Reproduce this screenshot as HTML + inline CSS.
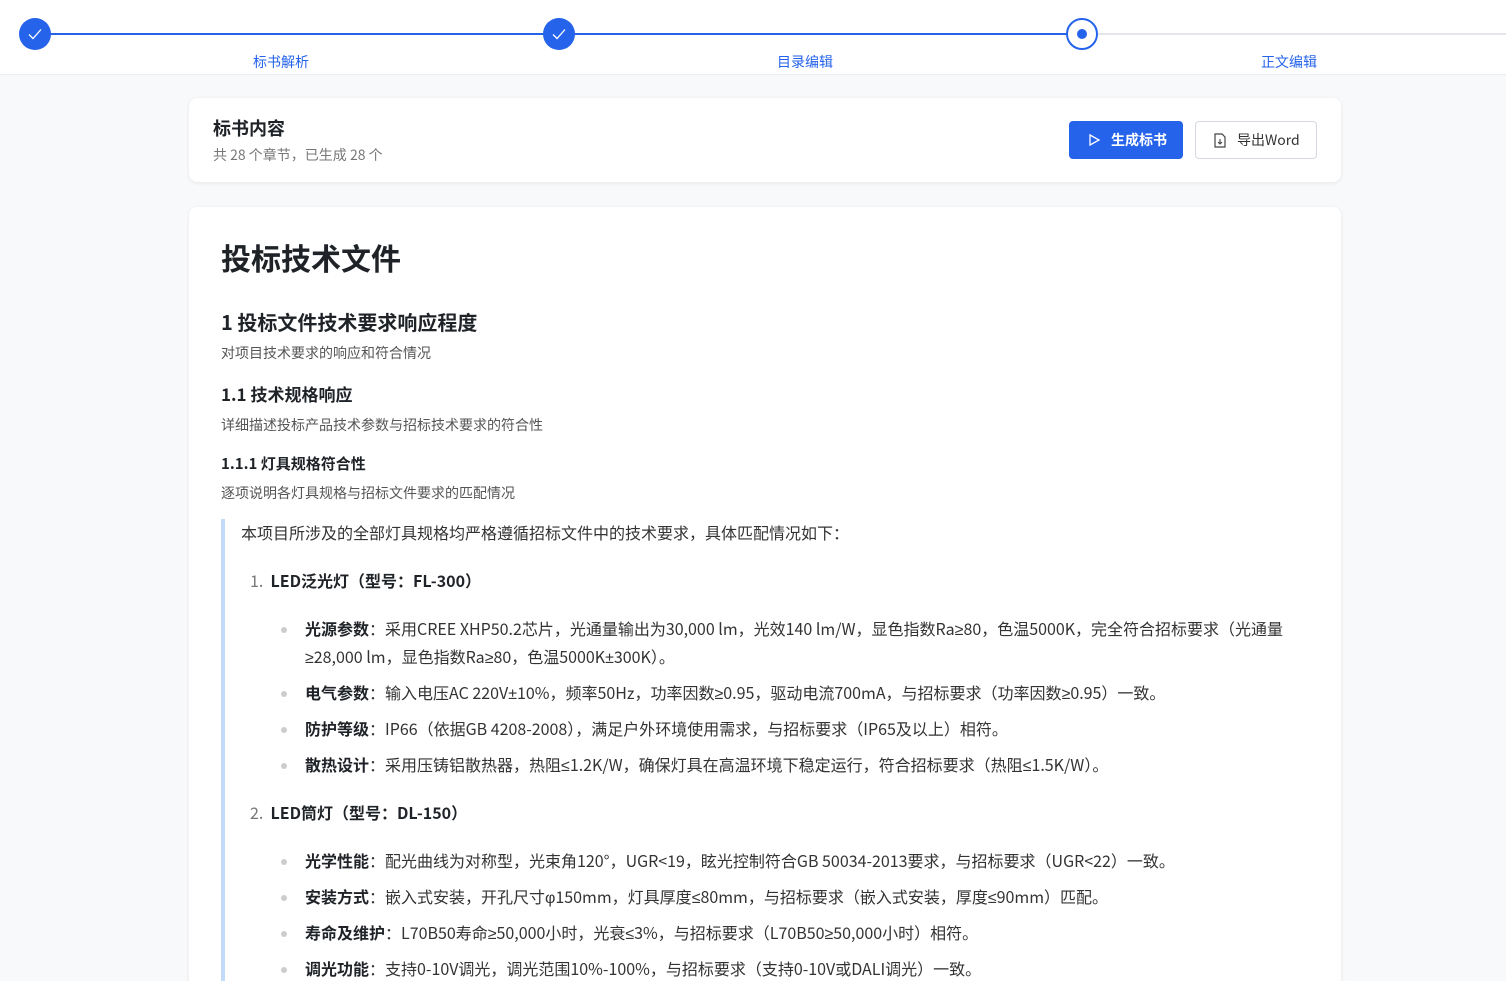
<!DOCTYPE html>
<html><head><meta charset="utf-8"><style>
*{margin:0;padding:0;box-sizing:border-box}
html,body{width:1506px;height:981px;overflow:hidden}
body{background:#f8f9fb;font-family:"Noto Sans CJK SC","Liberation Sans",sans-serif;color:#1f2328;position:relative;line-height:1.15}
.hdr{position:absolute;left:0;top:0;width:1506px;height:75px;background:#fff;border-bottom:1px solid #eceef2}
.ln{position:absolute;top:33px;height:2px}
.c{position:absolute;top:18px;width:32px;height:32px;border-radius:50%;background:#2563eb}
.c svg{position:absolute;left:8px;top:8px}
.lb{position:absolute;top:54px;font-size:14px;color:#2563eb;transform:translateX(-50%)}
.card{position:absolute;left:189px;width:1152px;background:#fff;border-radius:8px;box-shadow:0 1px 4px rgba(0,0,0,.08)}
.abs{position:absolute;white-space:nowrap}
.b{font-weight:bold}
.li{position:absolute;left:305px;font-size:16px;color:#333;white-space:nowrap}
.li b{color:#1f2328}
.m{font-family:"Liberation Sans",sans-serif}
.dot{position:absolute;left:281px;width:6px;height:6px;border-radius:50%;background:#ccc}
</style></head><body>
<div class="hdr">
<div class="ln" style="left:35px;width:1047px;background:#2563eb"></div>
<div class="ln" style="left:1098px;width:408px;background:#e4e6eb"></div>
<div class="c" style="left:19px"><svg width="16" height="16" viewBox="0 0 16 16"><path d="M2 8.5l4 4 8-9" stroke="#fff" stroke-width="1.3" fill="none"/></svg></div>
<div class="c" style="left:543px"><svg width="16" height="16" viewBox="0 0 16 16"><path d="M2 8.5l4 4 8-9" stroke="#fff" stroke-width="1.3" fill="none"/></svg></div>
<div class="c" style="left:1066px;background:#fff;border:2px solid #2563eb"><div style="position:absolute;left:9px;top:9px;width:10px;height:10px;border-radius:50%;background:#2563eb"></div></div>
<div class="lb" style="left:281px">标书解析</div>
<div class="lb" style="left:805px">目录编辑</div>
<div class="lb" style="left:1289px">正文编辑</div>
</div>
<div class="card" style="top:98px;height:84px">
<div class="abs b" style="left:24px;top:20px;font-size:18px">标书内容</div>
<div class="abs" style="left:24px;top:49px;font-size:14px;color:#777">共 28 个章节，已生成 28 个</div>
<div class="abs" style="left:880px;top:23px;width:114px;height:38px;background:#2563eb;border-radius:4px;color:#fff;font-size:14px;font-weight:bold;line-height:38px;padding-left:42px"><svg style="position:absolute;left:18px;top:12px" width="14" height="14" viewBox="0 0 14 14"><path d="M3 2l9 5-9 5z" stroke="#fff" stroke-width="1.3" fill="none"/></svg>生成标书</div>
<div class="abs" style="left:1006px;top:23px;width:122px;height:38px;border:1px solid #d5d8de;border-radius:4px;color:#333;font-size:14px;line-height:36px;padding-left:41px"><svg style="position:absolute;left:17px;top:11px" width="14" height="15" viewBox="0 0 14 15"><path d="M2 1h7l3 3v10H2z" stroke="#444" stroke-width="1.2" fill="none"/><path d="M7 6v5M5 9l2 2 2-2" stroke="#444" stroke-width="1.1" fill="none"/></svg>导出Word</div>
</div>
<div class="card" style="top:207px;height:800px"></div>
<div class="abs b" style="left:221px;top:240px;font-size:30px">投标技术文件</div>
<div class="abs b" style="left:221px;top:310px;font-size:20px">1 投标文件技术要求响应程度</div>
<div class="abs" style="left:221px;top:345px;font-size:14px;color:#555">对项目技术要求的响应和符合情况</div>
<div class="abs b" style="left:221px;top:384px;font-size:17px">1.1 技术规格响应</div>
<div class="abs" style="left:221px;top:417px;font-size:14px;color:#555">详细描述投标产品技术参数与招标技术要求的符合性</div>
<div class="abs b" style="left:221px;top:455px;font-size:15px">1.1.1 灯具规格符合性</div>
<div class="abs" style="left:221px;top:485px;font-size:14px;color:#555">逐项说明各灯具规格与招标文件要求的匹配情况</div>
<div style="position:absolute;left:221px;top:519px;width:4px;height:470px;background:#c2dbfb"></div>
<div class="abs" style="left:241px;top:523px;font-size:16px;color:#333">本项目所涉及的全部灯具规格均严格遵循招标文件中的技术要求，具体匹配情况如下：</div>
<div class="abs" style="left:250px;top:571px;font-size:16px"><span style="color:#777">1.</span>&nbsp; <b>LED泛光灯（型号：FL-300）</b></div>
<div class="dot" style="top:627px"></div><div class="li" style="top:619px"><b>光源参数</b>：采用CREE XHP50.2芯片，光通量输出为30,000 lm，光效140 lm/W，显色指数Ra<span class="m">≥</span>80，色温5000K，完全符合招标要求（光通量</div>
<div class="li" style="top:647px"><span class="m">≥</span>28,000 lm，显色指数Ra<span class="m">≥</span>80，色温5000K<span class="m">±</span>300K）。</div>
<div class="dot" style="top:691px"></div><div class="li" style="top:683px"><b>电气参数</b>：输入电压AC 220V<span class="m">±</span>10%，频率50Hz，功率因数<span class="m">≥</span>0.95，驱动电流700mA，与招标要求（功率因数<span class="m">≥</span>0.95）一致。</div>
<div class="dot" style="top:727px"></div><div class="li" style="top:719px"><b>防护等级</b>：IP66（依据GB 4208-2008），满足户外环境使用需求，与招标要求（IP65及以上）相符。</div>
<div class="dot" style="top:763px"></div><div class="li" style="top:755px"><b>散热设计</b>：采用压铸铝散热器，热阻<span class="m">≤</span>1.2K/W，确保灯具在高温环境下稳定运行，符合招标要求（热阻<span class="m">≤</span>1.5K/W）。</div>
<div class="abs" style="left:250px;top:803px;font-size:16px"><span style="color:#777">2.</span>&nbsp; <b>LED筒灯（型号：DL-150）</b></div>
<div class="dot" style="top:859px"></div><div class="li" style="top:851px"><b>光学性能</b>：配光曲线为对称型，光束角120°，UGR&lt;19，眩光控制符合GB 50034-2013要求，与招标要求（UGR&lt;22）一致。</div>
<div class="dot" style="top:895px"></div><div class="li" style="top:887px"><b>安装方式</b>：嵌入式安装，开孔尺寸<span class="m">φ</span>150mm，灯具厚度<span class="m">≤</span>80mm，与招标要求（嵌入式安装，厚度<span class="m">≤</span>90mm）匹配。</div>
<div class="dot" style="top:931px"></div><div class="li" style="top:923px"><b>寿命及维护</b>：L70B50寿命<span class="m">≥</span>50,000小时，光衰<span class="m">≤</span>3%，与招标要求（L70B50<span class="m">≥</span>50,000小时）相符。</div>
<div class="dot" style="top:967px"></div><div class="li" style="top:959px"><b>调光功能</b>：支持0-10V调光，调光范围10%-100%，与招标要求（支持0-10V或DALI调光）一致。</div>
</body></html>
